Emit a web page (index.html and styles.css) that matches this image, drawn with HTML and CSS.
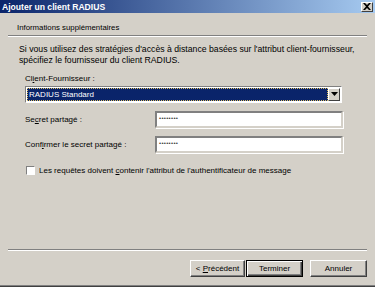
FILE: index.html
```html
<html>
<head>
	<title>Ajouter un client RADIUS</title>
	<meta charset='UTF-8'>
	<link rel="stylesheet" href="styles.css">
</head>
<body>
	<div class='dlg'>
		<div class='titlebar'>
			<span class='caption'>Ajouter un client RADIUS</span>
			<span class='closebtn'>
				<svg width='8' height='7' viewBox='0 0 8 7'><path d='M0 0h2l2 2 2-2h2L5 3.5 8 7H6L4 5 2 7H0l3-3.5z' fill='#000'/></svg>
			</span>
		</div>
		<div class='header'>Informations supplémentaires</div>
		<div class='sep'></div>
		<div class='content'>
			<div class='para'>Si vous utilisez des stratégies d'accès à distance basées sur l'attribut client-fournisseur,<br>spécifiez le fournisseur du client RADIUS.</div>
			<div class='block'>
				<div class='label'>Cl<u>i</u>ent-Fournisseur :</div>
				<div class='combo'>
					<div class='combo-val'><span class='focus'>RADIUS Standard</span></div>
					<div class='combo-btn'>
						<svg width='7' height='5' viewBox='0 0 7 5'><path d='M0 0h7L3.5 4z' fill='#000'/></svg>
					</div>
				</div>
			</div>
			<div class='row'>
				<div class='label'>Se<u>c</u>ret partagé :</div>
				<div class='edit'>••••••••</div>
			</div>
			<div class='row'>
				<div class='label'>Conf<u>i</u>rmer le secret partagé :</div>
				<div class='edit'>••••••••</div>
			</div>
			<div class='check'>
				<span class='box'></span>
				<span>Les requêtes doivent <u>c</u>ontenir l'attribut de l'authentificateur de message</span>
			</div>
		</div>
		<div class='sep'></div>
		<div class='buttons'>
			<div class='btn'>&lt;&nbsp;<u>P</u>récédent</div>
			<div class='btn default'>Terminer</div>
			<div class='btn cancel'>Annuler</div>
		</div>
	</div>
</body>
</html>
```

FILE: styles.css
```css
body {
	margin: 0;
	background-color: #d4d0c8;
	font-family: "Liberation Sans", Arial, sans-serif;
	font-size: 8px;
	color: #000;
}
.dlg {
	width: 375px;
	height: 285px;
	display: flex;
	flex-direction: column;
	border-bottom: 1px solid #808080;
	box-shadow: 0 1px 0 #404040;
}
.titlebar {
	height: 13px;
	display: flex;
	align-items: center;
	justify-content: space-between;
	padding: 0 2px 0 2px;
	background: linear-gradient(to right, #0a246a, #a6caf0);
}
.caption {
	color: #fff;
	font-weight: bold;
	font-size: 8.6px;
}
.closebtn {
	width: 12px;
	height: 10px;
	box-sizing: border-box;
	background: #d4d0c8;
	border: 1px solid;
	border-color: #fff #404040 #404040 #fff;
	display: flex;
	align-items: center;
	justify-content: center;
}
.header {
	height: 16px;
	padding: 6px 0 0 17px;
	display: flex;
	align-items: center;
	font-size: 7.8px;
}
.sep {
	margin: 0 8px;
	border-top: 1px solid #808080;
	border-bottom: 1px solid #fff;
}
.content {
	flex: 1;
	padding: 7px 0 0 19px;
}
.para {
	line-height: 11px;
	font-size: 8.7px;
}
.block {
	padding-left: 6px;
	margin-top: 7px;
}
.label {
	line-height: 11px;
}
.combo {
	margin-top: 2px;
	width: 317px;
	height: 17px;
	box-sizing: border-box;
	background: #fff;
	border: 1px solid;
	border-color: #808080 #fff #fff #808080;
	display: flex;
	padding: 1px;
}
.combo-val {
	flex: 1;
	background: #0a246a;
	color: #fff;
	display: flex;
	align-items: center;
	outline: 1px dotted #e0c060;
	outline-offset: -1px;
}
.focus {
	padding-left: 2px;
}
.combo-btn {
	width: 12px;
	box-sizing: border-box;
	background: #d4d0c8;
	border: 1px solid;
	border-color: #fff #404040 #404040 #fff;
	display: flex;
	align-items: center;
	justify-content: center;
}
.row {
	display: flex;
	align-items: center;
	padding-left: 6px;
	margin-top: 8px;
}
.row .label {
	width: 130px;
}
.edit {
	width: 188px;
	height: 17px;
	box-sizing: border-box;
	background: #fff;
	border: 2px solid;
	border-color: #808080 #d4d0c8 #d4d0c8 #808080;
	box-shadow: 1px 1px 0 #fff;
	font-size: 6px;
	letter-spacing: 0.3px;
	color: #404040;
	padding: 2px 0 0 2px;
}
.check {
	display: flex;
	align-items: center;
	padding-left: 7px;
	margin-top: 13px;
}
.box {
	width: 9px;
	height: 9px;
	box-sizing: border-box;
	background: #fff;
	border: 1px solid;
	border-color: #808080 #fff #fff #808080;
	margin-right: 4px;
}
.buttons {
	height: 34px;
	display: flex;
	justify-content: flex-end;
	align-items: center;
	padding-right: 8px;
}
.btn {
	width: 55px;
	height: 17px;
	box-sizing: border-box;
	border: 1px solid;
	border-color: #fff #404040 #404040 #fff;
	box-shadow: inset -1px -1px 0 #808080;
	display: flex;
	align-items: center;
	justify-content: center;
}
.btn.default {
	width: 57px;
	margin-left: 1px;
	border: 1px solid #000;
	box-shadow: inset 1px 1px 0 #fff, inset -1px -1px 0 #404040, inset -2px -2px 0 #808080;
}
.btn.cancel {
	width: 57px;
	margin-left: 7px;
}
```
